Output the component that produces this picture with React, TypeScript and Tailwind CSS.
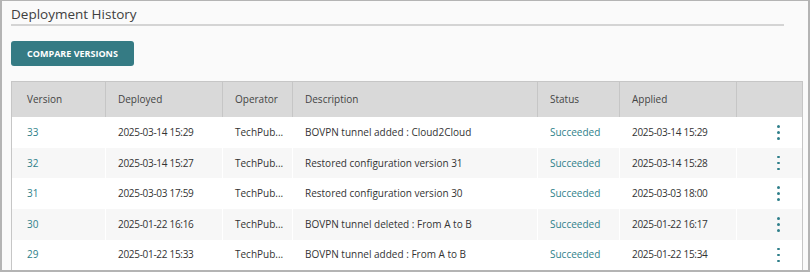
import React from "react";

const rows = [
  { v: "33", d: "2025-03-14 15:29", o: "TechPub...", desc: "BOVPN tunnel added : Cloud2Cloud", s: "Succeeded", a: "2025-03-14 15:29" },
  { v: "32", d: "2025-03-14 15:27", o: "TechPub...", desc: "Restored configuration version 31", s: "Succeeded", a: "2025-03-14 15:28" },
  { v: "31", d: "2025-03-03 17:59", o: "TechPub...", desc: "Restored configuration version 30", s: "Succeeded", a: "2025-03-03 18:00" },
  { v: "30", d: "2025-01-22 16:16", o: "TechPub...", desc: "BOVPN tunnel deleted : From A to B", s: "Succeeded", a: "2025-01-22 16:17" },
  { v: "29", d: "2025-01-22 15:33", o: "TechPub...", desc: "BOVPN tunnel added : From A to B", s: "Succeeded", a: "2025-01-22 15:34" },
];

const cols = "grid grid-cols-[94px_117px_70px_245px_82px_117px_67px]";

function Kebab() {
  return (
    <span className="flex flex-col items-center gap-[3.5px]">
      <span className="w-[2.5px] h-[2.5px] bg-[#2f7f8a] rounded-full" />
      <span className="w-[2.5px] h-[2.5px] bg-[#2f7f8a] rounded-full" />
      <span className="w-[2.5px] h-[2.5px] bg-[#2f7f8a] rounded-full" />
    </span>
  );
}

export default function App() {
  return (
    <div
      className="w-[810px] h-[272px] overflow-hidden bg-[#fafafa] border-l-2 border-r-2 border-b-2 border-t border-[#b4b4b4] pl-[9px] pr-[5px]"
      style={{ fontFamily: '"Open Sans", sans-serif' }}
    >
      <div className="pt-[4px] w-[773px] border-b-2 border-[#d4d4d4] text-[13.5px] leading-[18px] pb-[1px] text-[#404040]">
        Deployment History
      </div>
      <div className="pt-[13px]">
        <button className="h-[25px] w-[123px] rounded-[3px] bg-[#357b84] text-white text-[9px] font-bold">
          COMPARE VERSIONS
        </button>
      </div>
      <div className="mt-[15px] border-l border-r border-t border-[#c6c6c6] bg-white">
        <div className={`${cols} h-[35px] bg-[#d9d9d9] text-[10px] text-[#444]`}>
          {["Version", "Deployed", "Operator", "Description", "Status", "Applied", ""].map((h, i) => (
            <div
              key={i}
              className={`flex items-center ${i === 0 ? "pl-[15px]" : "pl-3"} ${i < 6 ? "border-r border-[#c6c6c6]" : ""}`}
            >
              {h}
            </div>
          ))}
        </div>
        {rows.map((r, idx) => (
          <div
            key={r.v}
            className={`${cols} h-[30.6px] text-[10px] text-[#333] ${idx % 2 === 1 ? "bg-[#f7f7f7]" : "bg-white"}`}
          >
            <div className="flex items-center pl-[15px] border-r border-white text-[#2f7f8a]">{r.v}</div>
            <div className="flex items-center pl-3 border-r border-white tracking-[-0.3px]">{r.d}</div>
            <div className="flex items-center pl-3 border-r border-white">{r.o}</div>
            <div className="flex items-center pl-3 border-r border-white">{r.desc}</div>
            <div className="flex items-center pl-3 border-r border-white text-[#2f7f8a]">{r.s}</div>
            <div className="flex items-center pl-3 border-r border-white tracking-[-0.3px]">{r.a}</div>
            <div className="flex items-center pl-[40px]">
              <Kebab />
            </div>
          </div>
        ))}
      </div>
    </div>
  );
}
